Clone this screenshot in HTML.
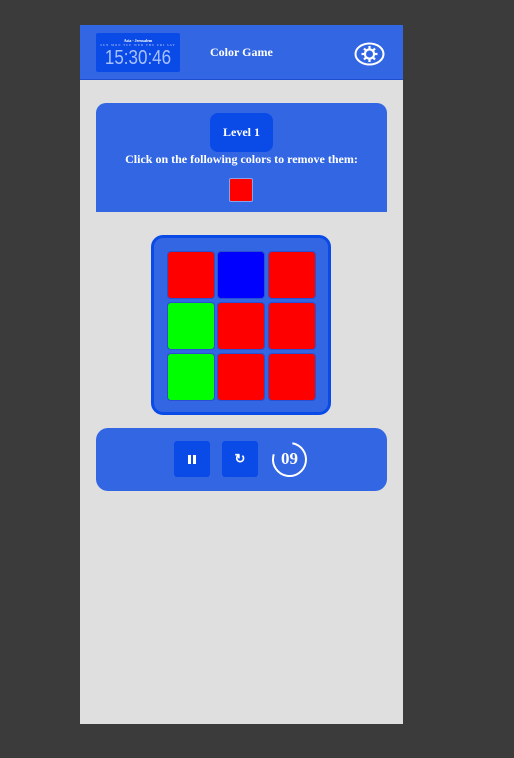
<!DOCTYPE html>
<html><head><style>
body{margin:0;width:514px;height:758px;background:#3b3b3b;position:relative;overflow:hidden;font-family:"Liberation Serif",serif;color:#fff;font-weight:bold}
.abs{position:absolute}
#page{left:80px;top:25px;width:323px;height:699px;background:#dfdfdf}
#hdr{left:80px;top:25px;width:323px;height:55px;background:#3266e3;border-bottom:1px solid #1f4fd0;box-sizing:border-box}
.cell{position:absolute;width:46px;height:46px;border-radius:3px;box-shadow:0 0 0 1px #2a4fd0}
.btn{position:absolute;width:36px;height:36px;background:#0a4be8;border-radius:3px;top:441px}
</style></head><body>
<div class="abs" id="page"></div>
<div class="abs" id="hdr"></div>
<div class="abs" style="left:96px;top:33px;width:84px;height:39px;background:#0a4be8;border-radius:2px;overflow:hidden;white-space:nowrap">
<div style="font-size:4px;text-align:center;margin-top:5px;line-height:5px">Asia - Jerusalem</div>
<div style="font-size:3px;text-align:center;color:#9bb3f5;letter-spacing:1px;line-height:4px">SUN MON TUE WED THU FRI SAT</div>
<div style="font-family:'Liberation Sans',sans-serif;font-weight:normal;font-size:20px;color:#a8c0ff;text-align:center;line-height:22px;transform:scaleX(0.85)">15:30:46</div>
</div>
<div class="abs" style="left:210px;top:45px;font-size:12px">Color Game</div>
<svg class="abs" style="left:354px;top:42px" width="31" height="24" viewBox="0 0 31 24"><ellipse cx="15.5" cy="12" rx="14" ry="10.5" fill="none" stroke="#fff" stroke-width="2"/><circle cx="15.5" cy="12" r="4.5" fill="none" stroke="#fff" stroke-width="2.2"/><g stroke="#fff" stroke-width="2.2"><line x1="15.5" y1="4" x2="15.5" y2="20"/><line x1="7.5" y1="12" x2="23.5" y2="12"/><line x1="10" y1="6.5" x2="21" y2="17.5"/><line x1="21" y1="6.5" x2="10" y2="17.5"/></g><circle cx="15.5" cy="12" r="3.5" fill="#3266e3"/></svg>
<div class="abs" style="left:96px;top:103px;width:291px;height:109px;background:#3266e3;border-radius:10px 10px 0 0"></div>
<div class="abs" style="left:210px;top:113px;width:63px;height:39px;background:#0a4be8;border-radius:8px;font-size:12px;text-align:center;line-height:39px">Level 1</div>
<div class="abs" style="left:96px;top:152px;width:291px;text-align:center;font-size:12px">Click on the following colors to remove them:</div>
<div class="abs" style="left:229px;top:178px;width:22px;height:22px;background:#f00;border:1px solid #8aa0e8;border-radius:2px"></div>
<div class="abs" style="left:151px;top:235px;width:174px;height:174px;background:#3266e3;border:3px solid #0a4be8;border-radius:12px"></div>
<div class="cell" style="left:168px;top:252px;background:#f00"></div>
<div class="cell" style="left:218px;top:252px;background:#00f"></div>
<div class="cell" style="left:269px;top:252px;background:#f00"></div>
<div class="cell" style="left:168px;top:303px;background:#0f0"></div>
<div class="cell" style="left:218px;top:303px;background:#f00"></div>
<div class="cell" style="left:269px;top:303px;background:#f00"></div>
<div class="cell" style="left:168px;top:354px;background:#0f0"></div>
<div class="cell" style="left:218px;top:354px;background:#f00"></div>
<div class="cell" style="left:269px;top:354px;background:#f00"></div>
<div class="abs" style="left:96px;top:428px;width:291px;height:63px;background:#3266e3;border-radius:12px"></div>
<div class="btn" style="left:174px"><div class="abs" style="left:14px;top:14px;width:3px;height:9px;background:#fff"></div><div class="abs" style="left:19px;top:14px;width:3px;height:9px;background:#fff"></div></div>
<div class="btn" style="left:222px;text-align:center;line-height:36px;font-size:13px">&#x21bb;</div>
<svg class="abs" style="left:271px;top:441px" width="37" height="37"><circle cx="18.5" cy="18.5" r="16.5" fill="none" stroke="#fff" stroke-width="2" stroke-dasharray="80 24" transform="rotate(-80 18.5 18.5)"/></svg>
<div class="abs" style="left:271px;top:449px;width:37px;text-align:center;font-size:17px">09</div>
</body></html>
